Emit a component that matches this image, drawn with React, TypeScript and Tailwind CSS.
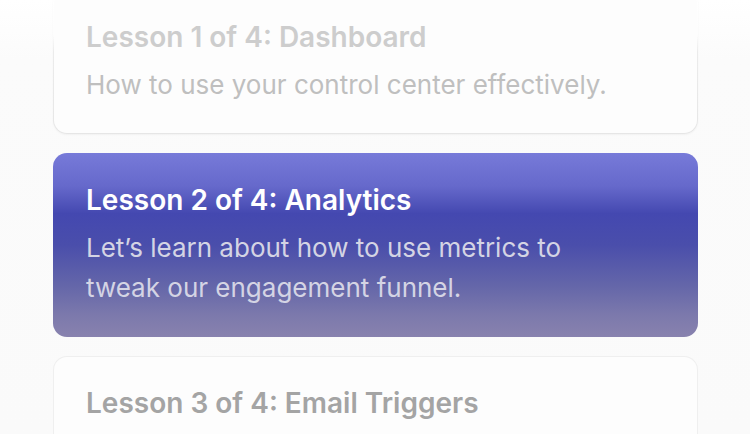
import React from "react";

type Lesson = { title: string; desc?: string; state: string };

const lessons: Lesson[] = [
  {
    title: "Lesson 1 of 4: Dashboard",
    desc: "How to use your control center effectively.",
    state: "before",
  },
  {
    title: "Lesson 2 of 4: Analytics",
    desc: "Let’s learn about how to use metrics to tweak our engagement funnel.",
    state: "active",
  },
  {
    title: "Lesson 3 of 4: Email Triggers",
    state: "after",
  },
];

function Text({ title, desc, state }: Lesson) {
  const active = state === "active";
  return (
    <>
      <div
        className={
          "text-[28px] leading-[34px] font-semibold " +
          (active ? "text-white" : state === "before" ? "text-[#cdcdcd]" : "text-[#a4a4a4]")
        }
      >
        {title}
      </div>
      {desc ? (
        <div
          className={
            "mt-[11px] text-[26px] leading-[40px] " +
            (active
              ? "max-w-[500px] text-[#d4d4e4]"
              : state === "before"
              ? "text-[#bfbfbf]"
              : "text-[#b5b5b5]")
          }
        >
          {desc}
        </div>
      ) : (
        <div className="mt-[11px] h-[80px]" />
      )}
    </>
  );
}

export default function App() {
  return (
    <div
      className="relative h-[434px] w-[750px] overflow-hidden bg-[linear-gradient(180deg,#ffffff_0%,#fbfbfb_60px,#fafafa_100%)]"
      style={{ fontFamily: "Inter, 'Noto Sans', sans-serif" }}
    >
      <div className="mt-[-10px] flex flex-col gap-[19px] pl-[53px]">
        {lessons.map((l) => {
          const active = l.state === "active";
          if (active) {
            return (
              <div
                key={l.title}
                className="w-[645px] rounded-[14px] bg-[linear-gradient(180deg,#777ad9_0%,#6669cb_18%,#4448b0_33%,#4a4eab_50%,#6466a9_72%,#7c79ac_88%,#8882ae_100%)] px-[33px] pb-[29px] pt-[30px]"
              >
                <Text {...l} />
              </div>
            );
          }
          const before = l.state === "before";
          return (
            <div
              key={l.title}
              className={
                "w-[645px] rounded-[14px] p-px " +
                (before
                  ? "bg-[linear-gradient(180deg,rgba(236,236,236,0)_0%,rgba(236,236,236,0)_45px,#ebebeb_62px,#e6e6e6_100%)] shadow-[0_1px_2px_rgba(0,0,0,0.04)]"
                  : "bg-[#efefef]")
              }
            >
              <div className="rounded-[13px] bg-[#fdfdfd] px-[32px] pb-[28px] pt-[29px]">
                <Text {...l} />
              </div>
            </div>
          );
        })}
      </div>
    </div>
  );
}
